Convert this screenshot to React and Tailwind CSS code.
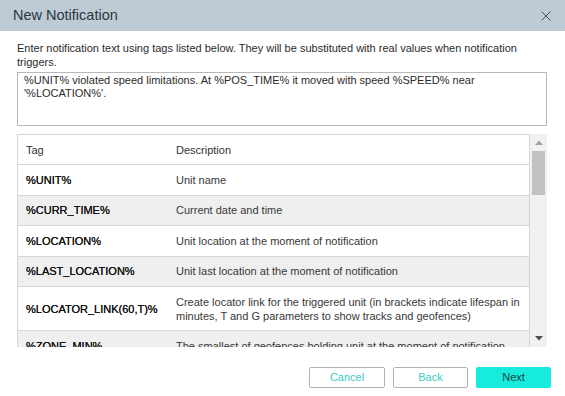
import React from "react";

const rows = [
  { tag: "%UNIT%", desc: "Unit name" },
  { tag: "%CURR_TIME%", desc: "Current date and time" },
  { tag: "%LOCATION%", desc: "Unit location at the moment of notification" },
  { tag: "%LAST_LOCATION%", desc: "Unit last location at the moment of notification" },
  {
    tag: "%LOCATOR_LINK(60,T)%",
    desc: "Create locator link for the triggered unit (in brackets indicate lifespan in minutes, T and G parameters to show tracks and geofences)",
  },
  { tag: "%ZONE_MIN%", desc: "The smallest of geofences holding unit at the moment of notification" },
  { tag: "%ZONES_ALL%", desc: "All geofences holding unit at the moment of notification" },
];

const App = () => {
  return (
    <div
      className="w-[565px] h-[396px] bg-white flex flex-col overflow-hidden text-[#333]"
      style={{ fontFamily: '"Liberation Sans", Arial, sans-serif' }}
    >
      {/* Title bar */}
      <div className="h-[31px] shrink-0 bg-[#bfcbd4] flex items-center justify-between pl-[13px] pr-[14px]">
        <span className="text-[14.5px] text-[#2a3740]">New Notification</span>
        <svg width="10" height="10" viewBox="0 0 10 10">
          <path d="M0.5 0.5 L9.5 9.5 M9.5 0.5 L0.5 9.5" stroke="#4a555c" strokeWidth="1" fill="none" />
        </svg>
      </div>

      {/* Body */}
      <div className="flex flex-col pl-[17px] pr-[18px]">
        <p className="mt-[10px] text-[11px] leading-[14px] text-[#2b2b2b] pr-[20px]">
          Enter notification text using tags listed below. They will be substituted with real values when notification triggers.
        </p>

        <textarea
          readOnly
          className="mt-[3px] w-[530px] h-[54px] resize-none border border-[#b8b8b8] px-[6px] pt-[1px] text-[11px] leading-[13px] text-[#2b2b2b] outline-none"
          style={{ fontFamily: '"Liberation Sans", Arial, sans-serif' }}
          value={"%UNIT% violated speed limitations. At %POS_TIME% it moved with speed %SPEED% near '%LOCATION%'."}
        />

        {/* Tags table */}
        <div className="mt-[8px] h-[213px] flex">
          <div className="w-[513px] h-full overflow-hidden border-l border-t border-r border-[#d6d6d6]">
            <div className="flex border-b border-[#d6d6d6] bg-white text-[11px] leading-[14px] text-[#333]">
              <div className="w-[150px] shrink-0 pl-[8px] py-[7.7px]">Tag</div>
              <div className="flex-1 px-[8px] py-[7.7px]">Description</div>
            </div>
            {rows.map((r, i) => (
              <div
                key={r.tag}
                className={`flex border-b border-[#d6d6d6] text-[11px] leading-[14px] ${i % 2 === 1 ? "bg-[#efefef]" : "bg-white"}`}
              >
                <div className="w-[150px] shrink-0 pl-[8px] py-[7.7px] text-[#111] flex items-center [text-shadow:0_0_0.3px_#111]">
                  {r.tag}
                </div>
                <div className="flex-1 px-[8px] py-[7.7px] text-[#383838]">{r.desc}</div>
              </div>
            ))}
          </div>

          {/* Scrollbar */}
          <div className="w-[17px] h-full bg-[#f1f1f1] flex flex-col items-center">
            <div className="h-[17px] w-full flex items-center justify-center">
              <svg width="8" height="5" viewBox="0 0 8 5">
                <path d="M0 5 L4 0.5 L8 5 Z" fill="#a3a3a3" />
              </svg>
            </div>
            <div className="w-[13px] h-[44px] bg-[#c1c1c1]" />
            <div className="flex-1" />
            <div className="h-[17px] w-full flex items-center justify-center">
              <svg width="8" height="5" viewBox="0 0 8 5">
                <path d="M0 0 L8 0 L4 4.5 Z" fill="#505050" />
              </svg>
            </div>
          </div>
        </div>
      </div>

      {/* Footer buttons */}
      <div className="mt-[20px] flex justify-end gap-[8px] pr-[14px]">
        <button className="w-[76px] h-[21px] border border-[#b3b3b3] bg-white text-[11px] text-[#38ccc2] rounded-[2px]">
          Cancel
        </button>
        <button className="w-[75px] h-[21px] border border-[#b3b3b3] bg-white text-[11px] text-[#38ccc2] rounded-[2px]">
          Back
        </button>
        <button className="w-[75px] h-[21px] bg-[#17ebdd] text-[11px] text-[#1d4444] rounded-[2px]">
          Next
        </button>
      </div>
    </div>
  );
};

export default App;
